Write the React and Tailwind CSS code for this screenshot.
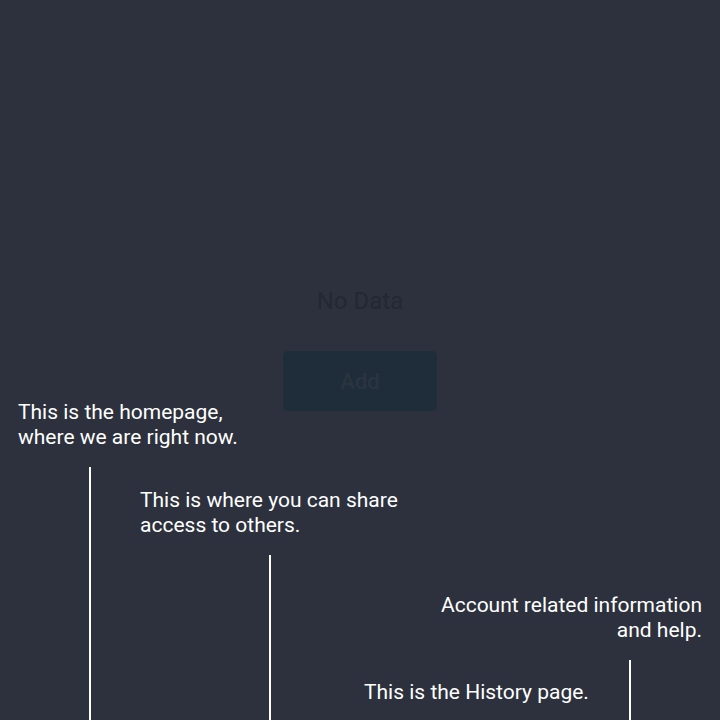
function Callout({ lines, align = "left", className, lineClass }) {
  return (
    <div className={`absolute flex flex-col ${className}`}>
      <div className={`text-[21px] leading-[25px] ${align === "right" ? "text-right" : ""}`}>
        {lines.map((l) => (
          <p key={l}>{l}</p>
        ))}
      </div>
      <div className={`w-[2px] grow bg-white ${lineClass}`} />
    </div>
  );
}

export default function App() {
  return (
    <div
      className="relative h-[720px] w-[720px] overflow-hidden bg-[#2c313d] text-white"
      style={{ fontFamily: 'Roboto, "Noto Sans", sans-serif' }}
    >
      {/* empty-state page, dimmed under the tour overlay */}
      <div className="flex flex-col items-center pt-[285px]">
        <p className="text-[24px] leading-[32px] text-[#232833]">No Data</p>
        <button className="mt-[34px] flex h-[60px] w-[154px] items-center justify-center rounded-[5px] bg-[#1f2d3a] text-[22px] font-medium text-[#2a3441]">
          Add
        </button>
      </div>

      {/* tour callouts, each pointing down at its tab */}
      <Callout
        className="bottom-0 left-[18px] top-[400px]"
        lines={["This is the homepage,", "where we are right now."]}
        lineClass="ml-[71px] mt-[17px]"
      />
      <Callout
        className="bottom-0 left-[140px] top-[488px]"
        lines={["This is where you can share", "access to others."]}
        lineClass="ml-[129px] mt-[17px]"
      />
      <Callout
        className="bottom-0 right-[18px] top-[593px]"
        align="right"
        lines={["Account related information", "and help."]}
        lineClass="self-end mr-[71px] mt-[17px]"
      />
      <div className="absolute left-[364px] top-[680px] text-[21px] leading-[25px]">
        <p>This is the History page.</p>
      </div>
    </div>
  );
}
